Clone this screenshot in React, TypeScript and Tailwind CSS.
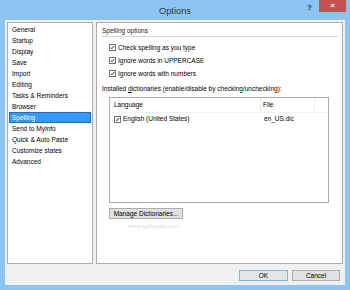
const categories = [
  'General',
  'Startup',
  'Display',
  'Save',
  'Import',
  'Editing',
  'Tasks & Reminders',
  'Browser',
  'Spelling',
  'Send to MyInfo',
  'Quick & Auto Paste',
  'Customize states',
  'Advanced',
]

const spellingOptions = [
  'Check spelling as you type',
  'Ignore words in UPPERCASE',
  'Ignore words with numbers',
]

function CheckBox() {
  return (
    <span className="flex h-[7px] w-[7px] shrink-0 items-center justify-center border border-[#707070] bg-white">
      <svg viewBox="0 0 7 7" className="h-[7px] w-[7px]">
        <path d="M1.2 3.6 L2.8 5.2 L5.8 1.4" fill="none" stroke="#222" strokeWidth="1.3" />
      </svg>
    </span>
  )
}

export default function App() {
  return (
    <div className="flex h-[290px] w-[350px] flex-col bg-[#8cc4f2] font-['Liberation_Sans',Arial,sans-serif] text-[6.5px] leading-[8px] text-black">
      {/* title bar */}
      <div className="grid h-[20px] shrink-0 grid-cols-[1fr_auto_1fr]">
        <div />
        <div className="flex items-center pt-[1px] text-[9.3px] text-[#333]">Options</div>
        <div className="flex items-start justify-end pr-[4px]">
          <span className="mr-[7px] mt-[4px] text-[8px] font-bold leading-[8px] text-[#333]">?</span>
          <span className="flex h-[12px] w-[27px] items-center justify-center bg-[#c9504f] text-[8px] font-bold leading-[8px] text-white">
            ×
          </span>
        </div>
      </div>

      {/* client */}
      <div className="mx-[5px] mb-[5px] flex flex-1 flex-col bg-[#f0f0f0] px-[2px] pt-[2px]">
        <div className="flex h-[242px] gap-[3px]">
          {/* category list */}
          <div className="flex w-[86px] flex-col border border-[#acacac] bg-white px-[1px] pt-[1px]">
            {categories.map(c => (
              <div
                key={c}
                className={
                  c === 'Spelling'
                    ? 'h-[11px] border border-[#1e6fc4] bg-[#3399ff] pl-[2px] leading-[9px] text-white'
                    : 'h-[11px] pl-[3px] leading-[11px]'
                }
              >
                {c}
              </div>
            ))}
          </div>

          {/* spelling page */}
          <div className="flex flex-1 flex-col border border-[#acacac] bg-white pl-[5px] pr-[4px] pt-[4px]">
            <div className="text-[#222]">Spelling options</div>
            <div className="mt-[1px] h-[1px] bg-[#d5d5d5]" />

            <div className="mt-[4px] flex flex-col pl-[7px]">
              {spellingOptions.map(o => (
                <div key={o} className="flex h-[13px] items-center gap-[2px]">
                  <CheckBox />
                  <span>{o}</span>
                </div>
              ))}
            </div>

            <div className="mt-[5px]">
              Installed <span className="underline">d</span>ictionaries (enable/disable by checking/unchecking):
            </div>

            <div className="ml-[7px] mt-[4px] flex h-[106px] w-[220px] flex-col border border-[#acacac] bg-white">
              <div className="flex h-[15px] border-b border-[#f0f0f0]">
                <div className="flex w-[151px] items-center border-r border-[#e5e5e5] pl-[4px]">Language</div>
                <div className="flex w-[54px] items-center border-r border-[#f0f0f0] pl-[2px]">File</div>
              </div>
              <div className="flex h-[12px] items-center">
                <div className="flex w-[151px] items-center gap-[2px] pl-[4px]">
                  <CheckBox />
                  <span>English (United States)</span>
                </div>
                <div className="pl-[3px]">en_US.dic</div>
              </div>
            </div>

            <button className="ml-[7px] mt-[5px] h-[11px] w-[74px] border border-[#adadad] bg-[#e1e1e1] text-[6.5px] leading-[8px]">
              Manage Dictionaries...
            </button>
            <div className="ml-[26px] mt-[3px] text-[6px] text-[#dcdcdc]">www.softpedia.com</div>
          </div>
        </div>

        {/* buttons */}
        <div className="mt-[6px] flex justify-end gap-[4px] pr-[3px]">
          <button className="h-[11px] w-[49px] border border-[#7eb4ea] bg-[#e5e5e5] text-[6.5px] leading-[8px]">OK</button>
          <button className="h-[11px] w-[48px] border border-[#adadad] bg-[#e1e1e1] text-[6.5px] leading-[8px]">Cancel</button>
        </div>
      </div>
    </div>
  )
}
